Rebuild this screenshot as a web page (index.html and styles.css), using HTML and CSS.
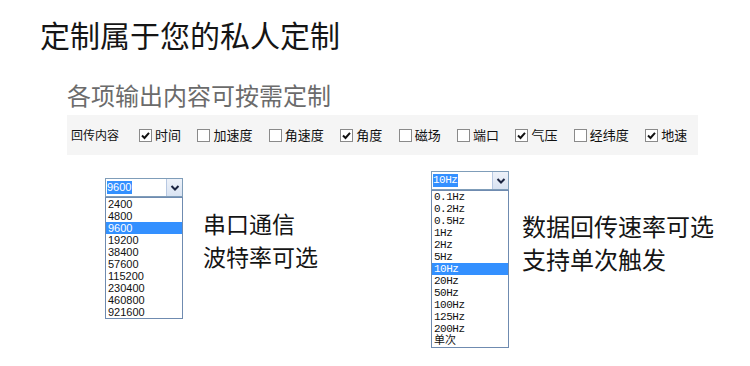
FILE: index.html
```html
<!DOCTYPE html>
<html lang="zh">
<head>
<meta charset="utf-8">
<link rel="stylesheet" href="styles.css">
</head>
<body>
<div class="page">
  <h1 class="title">定制属于您的私人定制</h1>
  <div class="subtitle">各项输出内容可按需定制</div>
  <div class="panel">
    <span class="panel-label">回传内容</span>
    <div class="opts">
      <label class="opt"><span class="box checked"><svg viewBox="0 0 13 13" width="13" height="13"><path d="M3 6.5 L5.5 9 L10 3.8" fill="none" stroke="#111" stroke-width="2"/></svg></span>时间</label>
      <label class="opt"><span class="box"></span>加速度</label>
      <label class="opt"><span class="box"></span>角速度</label>
      <label class="opt"><span class="box checked"><svg viewBox="0 0 13 13" width="13" height="13"><path d="M3 6.5 L5.5 9 L10 3.8" fill="none" stroke="#111" stroke-width="2"/></svg></span>角度</label>
      <label class="opt"><span class="box"></span>磁场</label>
      <label class="opt"><span class="box"></span>端口</label>
      <label class="opt"><span class="box checked"><svg viewBox="0 0 13 13" width="13" height="13"><path d="M3 6.5 L5.5 9 L10 3.8" fill="none" stroke="#111" stroke-width="2"/></svg></span>气压</label>
      <label class="opt"><span class="box"></span>经纬度</label>
      <label class="opt"><span class="box checked"><svg viewBox="0 0 13 13" width="13" height="13"><path d="M3 6.5 L5.5 9 L10 3.8" fill="none" stroke="#111" stroke-width="2"/></svg></span>地速</label>
    </div>
  </div>
  <div class="demos">
    <div class="demo demo-baud">
      <div class="dropdown">
        <div class="select"><span class="sel-text"><span class="sel-hl">9600</span></span><span class="arrow"><svg viewBox="0 0 16 17" width="16" height="17"><path d="M4.5 7 L8 10.5 L11.5 7" fill="none" stroke="#1b2440" stroke-width="2"/></svg></span></div>
        <ul class="list">
          <li>2400</li><li>4800</li><li class="hl">9600</li><li>19200</li><li>38400</li><li>57600</li><li>115200</li><li>230400</li><li>460800</li><li>921600</li>
        </ul>
      </div>
      <div class="desc desc-baud">串口通信<br>波特率可选</div>
    </div>
    <div class="demo demo-rate">
      <div class="dropdown">
        <div class="select mono"><span class="sel-text"><span class="sel-hl">10Hz</span></span><span class="arrow"><svg viewBox="0 0 16 17" width="16" height="17"><path d="M4.5 7 L8 10.5 L11.5 7" fill="none" stroke="#1b2440" stroke-width="2"/></svg></span></div>
        <ul class="list mono">
          <li>0.1Hz</li><li>0.2Hz</li><li>0.5Hz</li><li>1Hz</li><li>2Hz</li><li>5Hz</li><li class="hl">10Hz</li><li>20Hz</li><li>50Hz</li><li>100Hz</li><li>125Hz</li><li>200Hz</li><li class="cjk">单次</li>
        </ul>
      </div>
      <div class="desc desc-rate">数据回传速率可选<br>支持单次触发</div>
    </div>
  </div>
</div>
</body>
</html>
```
FILE: styles.css
```css
* { box-sizing: border-box; }
html, body { margin: 0; padding: 0; background: #fff; }
body {
  width: 750px;
  height: 366px;
  overflow: hidden;
  font-family: "Noto Sans CJK SC", "Noto Sans", sans-serif;
}
.page { padding-left: 40px; }
.title {
  margin: 19px 0 0 0;
  font-size: 30px;
  line-height: 30px;
  font-weight: 400;
  color: #151515;
}
.subtitle {
  margin: 34px 0 0 27px;
  font-size: 24px;
  line-height: 24px;
  color: #6b6b6b;
}
.panel {
  margin: 8px 0 0 27px;
  width: 631px;
  height: 40px;
  background: #f5f5f5;
  display: flex;
  align-items: center;
  padding-left: 4px;
  color: #111;
}
.panel-label {
  font-size: 12px;
  line-height: 14px;
  margin-right: 20px;
}
.opts {
  display: flex;
  align-items: center;
  gap: 16.4px;
}
.opt {
  display: flex;
  align-items: center;
  font-size: 13px;
  line-height: 14px;
}
.box {
  width: 13px;
  height: 13px;
  border: 1px solid #8a8a8a;
  background: #fff;
  margin-right: 3px;
  position: relative;
  display: block;
}
.box svg { position: absolute; left: -1px; top: -1px; }

.demos {
  display: flex;
  margin-top: 16px;
}
.demo { display: flex; align-items: flex-start; }
.demo-baud { margin-left: 65px; padding-top: 7px; width: 326px; }
.demo-rate { margin-left: 0; }
.dropdown { width: 78px; flex: none; }
.select {
  height: 19px;
  border: 1px solid #7f9db9;
  background: #fff;
  display: flex;
  align-items: stretch;
  font-family: "Liberation Sans", sans-serif;
  font-size: 11px;
}
.sel-text {
  flex: 1;
  display: flex;
  align-items: center;
  padding-left: 1px;
}
.sel-hl {
  background: #3390ff;
  color: #fff;
  line-height: 13px;
  padding: 0 1px 0 0;
}
.arrow {
  width: 16px;
  border-left: 1px solid #b7c8e2;
  background: linear-gradient(#eef2f9, #d9e3f2);
  display: block;
}
.arrow svg { display: block; }
.list {
  list-style: none;
  margin: 0;
  padding: 0;
  border: 1px solid #6f8bb0;
  background: #fff;
  font-family: "Liberation Sans", sans-serif;
  font-size: 11px;
  color: #111;
}
.list li {
  height: 12px;
  line-height: 12px;
  padding-left: 2px;
}
.list li.hl { background: #3390ff; color: #fff; }
.mono {
  font-family: "Liberation Mono", "Noto Sans CJK SC", monospace;
  letter-spacing: -0.5px;
}
.list.mono li.cjk { letter-spacing: 0; }
.desc {
  font-size: 23px;
  line-height: 33px;
  color: #151515;
  white-space: nowrap;
}
.desc-baud { margin: 29px 0 0 20px; }
.desc-rate { margin: 38px 0 0 13px; font-size: 24px; }
```
